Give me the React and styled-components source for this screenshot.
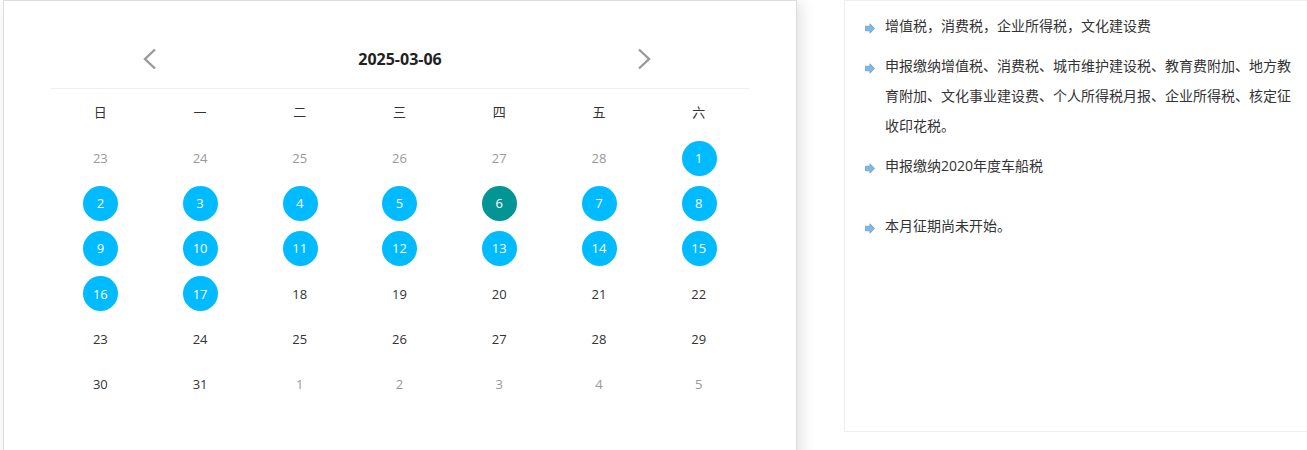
import styled, { createGlobalStyle } from 'styled-components';

const GlobalStyle = createGlobalStyle`
  html, body {
    margin: 0;
    padding: 0;
    height: 450px;
    overflow: hidden;
    background: #fff;
    font-family: "Open Sans", "Noto Sans CJK SC", sans-serif;
  }
`;

const weekDays = ['日', '一', '二', '三', '四', '五', '六'];

// kind: muted = other month, plain = no filing, active = filing day, today = selected
const days = [
  ...[23, 24, 25, 26, 27, 28].map((n) => ({ n, kind: 'muted' })),
  ...Array.from({ length: 17 }, (_, i) => ({ n: i + 1, kind: i + 1 === 6 ? 'today' : 'active' })),
  ...Array.from({ length: 14 }, (_, i) => ({ n: i + 18, kind: 'plain' })),
  ...[1, 2, 3, 4, 5].map((n) => ({ n, kind: 'muted' })),
];

const notes = [
  { text: '增值税，消费税，企业所得税，文化建设费' },
  {
    text: '申报缴纳增值税、消费税、城市维护建设税、教育费附加、地方教育附加、文化事业建设费、个人所得税月报、企业所得税、核定征收印花税。',
  },
  { text: '申报缴纳2020年度车船税' },
  { text: '本月征期尚未开始。', gap: true },
];

const Chevron = ({ flip }) => (
  <svg width="16" height="24" viewBox="0 0 16 24" fill="none">
    <path
      d={flip ? 'M3 2.5 L13 12 L3 21.5' : 'M13 2.5 L3 12 L13 21.5'}
      stroke="#999"
      strokeWidth="2.4"
    />
  </svg>
);

const Arrow = () => (
  <svg width="10" height="11" viewBox="0 0 10 11">
    <path d="M0.5 3.2 H5 V0.8 L9.5 5.5 L5 10.2 V7.8 H0.5 Z" fill="#7db9e8" stroke="#6f9fc4" strokeWidth="0.8" />
  </svg>
);

const App = () => (
  <>
    <GlobalStyle />
    <Page>
      <CalendarPanel>
        <CalendarHead>
          <NavButton><Chevron /></NavButton>
          <Title>2025-03-06</Title>
          <NavButton><Chevron flip /></NavButton>
        </CalendarHead>
        <WeekRow>
          {weekDays.map((d) => (
            <WeekDay key={d}>{d}</WeekDay>
          ))}
        </WeekRow>
        <DayGrid>
          {days.map((d, i) => (
            <DayCell key={i}>
              <Day $kind={d.kind}>{d.n}</Day>
            </DayCell>
          ))}
        </DayGrid>
      </CalendarPanel>
      <NotesPanel>
        {notes.map((note) => (
          <Note key={note.text} $gap={note.gap}>
            <NoteIcon><Arrow /></NoteIcon>
            <span>{note.text}</span>
          </Note>
        ))}
      </NotesPanel>
    </Page>
  </>
);

export default App;

const Page = styled.div`
  display: flex;
  align-items: flex-start;
  gap: 47px;
  width: 1307px;
  height: 450px;
  padding-left: 3px;
  box-sizing: border-box;
  overflow: hidden;
`;

const CalendarPanel = styled.section`
  flex: none;
  width: 794px;
  height: 470px;
  box-sizing: border-box;
  padding: 0 47px;
  background: #fff;
  border: 1px solid #ddd;
  box-shadow: 4px 2px 14px rgba(0, 0, 0, 0.12);
`;

const CalendarHead = styled.header`
  display: flex;
  align-items: center;
  justify-content: center;
  height: 88px;
  padding: 29px 6px 0 0;
  box-sizing: border-box;
  border-bottom: 1px solid #eee;
`;

const NavButton = styled.span`
  display: flex;
  width: 16px;
  height: 24px;
`;

const Title = styled.h2`
  width: 90px;
  margin: 0 191px 0 197px;
  font-size: 16px;
  font-weight: 700;
  line-height: 24px;
  text-align: center;
  white-space: nowrap;
  color: #222;
`;

const WeekRow = styled.div`
  display: grid;
  grid-template-columns: repeat(7, 1fr);
  height: 46.5px;
  box-sizing: border-box;
  padding-bottom: 2px;
  align-items: center;
`;

const WeekDay = styled.div`
  padding-right: 1px;
  text-align: center;
  font-size: 13px;
  color: #333;
`;

const DayGrid = styled.div`
  display: grid;
  grid-template-columns: repeat(7, 1fr);
  grid-auto-rows: 45.2px;
`;

const DayCell = styled.div`
  display: flex;
  align-items: center;
  justify-content: center;
`;

const dayBackground = { active: '#00bbff', today: '#039494' };
const dayColor = { muted: '#999', plain: '#333', active: '#fff', today: '#fff' };

const Day = styled.span`
  display: flex;
  align-items: center;
  justify-content: center;
  width: 35px;
  height: 35px;
  box-sizing: border-box;
  padding-right: 1px;
  border-radius: 50%;
  font-size: 13px;
  background: ${(p) => dayBackground[p.$kind] || 'transparent'};
  color: ${(p) => dayColor[p.$kind]};
`;

const NotesPanel = styled.aside`
  flex: 1;
  height: 432px;
  box-sizing: border-box;
  padding: 10px 14px 0 20px;
  margin-right: -2px;
  border: 1px solid #eee;
`;

const Note = styled.div`
  display: flex;
  margin-top: ${(p) => (p.$gap ? '30px' : '0')};
  margin-bottom: 10px;
  font-size: 14px;
  line-height: 30px;
  color: #333;
`;

const NoteIcon = styled.span`
  flex: none;
  display: flex;
  align-items: center;
  width: 20px;
  height: 30px;
  padding-top: 5px;
  box-sizing: border-box;
`;
